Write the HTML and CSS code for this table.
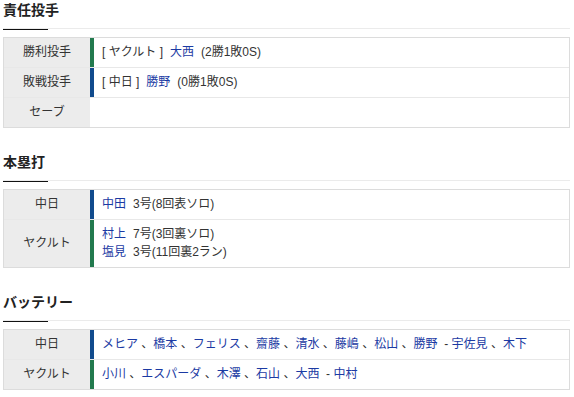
FILE: index.html
```html
<!DOCTYPE html>
<html lang="ja">
<head>
<meta charset="utf-8">
<link rel="stylesheet" href="styles.css">
</head>
<body>
<div class="page">
  <section class="sec">
    <h2 class="sec-title">責任投手</h2>
    <div class="tbl">
      <div class="row">
        <div class="lbl">勝利投手</div>
        <div class="val green"><span class="team">[ ヤクルト ]</span><a class="nm">大西</a><span>(2勝1敗0S)</span></div>
      </div>
      <div class="row">
        <div class="lbl">敗戦投手</div>
        <div class="val blue"><span class="team">[ 中日 ]</span><a class="nm">勝野</a><span>(0勝1敗0S)</span></div>
      </div>
      <div class="row">
        <div class="lbl">セーブ</div>
        <div class="val none"></div>
      </div>
    </div>
  </section>

  <section class="sec">
    <h2 class="sec-title">本塁打</h2>
    <div class="tbl">
      <div class="row">
        <div class="lbl">中日</div>
        <div class="val blue"><div><a class="nm">中田</a><span>3号(8回表ソロ)</span></div></div>
      </div>
      <div class="row">
        <div class="lbl">ヤクルト</div>
        <div class="val green">
          <div><a class="nm">村上</a><span>7号(3回裏ソロ)</span></div>
          <div><a class="nm">塩見</a><span>3号(11回裏2ラン)</span></div>
        </div>
      </div>
    </div>
  </section>

  <section class="sec">
    <h2 class="sec-title">バッテリー</h2>
    <div class="tbl">
      <div class="row">
        <div class="lbl">中日</div>
        <div class="val blue"><a class="pl">メヒア</a> 、<a class="pl">橋本</a> 、<a class="pl">フェリス</a> 、<a class="pl">齋藤</a> 、<a class="pl">清水</a> 、<a class="pl">藤嶋</a> 、<a class="pl">松山</a> 、<a class="pl">勝野</a> &nbsp;- <a class="pl">宇佐見</a> 、<a class="pl">木下</a></div>
      </div>
      <div class="row">
        <div class="lbl">ヤクルト</div>
        <div class="val green"><a class="pl">小川</a> 、<a class="pl">エスパーダ</a> 、<a class="pl">木澤</a> 、<a class="pl">石山</a> 、<a class="pl">大西</a> &nbsp;- <a class="pl">中村</a></div>
      </div>
    </div>
  </section>
</div>
</body>
</html>
```

FILE: styles.css
```css
* { box-sizing: border-box; }

body {
  margin: 0;
  background: #fff;
  color: #333;
  font-family: "Liberation Sans", "Noto Sans CJK JP", sans-serif;
  font-size: 12px;
}

.page {
  width: 570px;
  padding-left: 3px;
}

.sec + .sec {
  margin-top: 24px;
}

.sec-title {
  position: relative;
  margin: 0;
  font-size: 14px;
  font-weight: bold;
  line-height: 20px;
  padding-bottom: 8px;
  color: #222;
  border-bottom: 1px solid #ebebeb;
}

.sec-title::after {
  content: "";
  position: absolute;
  left: 0;
  bottom: -2px;
  width: 45px;
  height: 1px;
  background: #111;
}

.tbl {
  margin-top: 8px;
  border: 1px solid #dcdcdc;
}

.row {
  display: flex;
}

.row + .row {
  border-top: 1px solid #e8e8e8;
}

.lbl {
  width: 86px;
  flex: none;
  background: #ececec;
  text-align: center;
  display: flex;
  align-items: center;
  justify-content: center;
  line-height: 18px;
  padding: 5px 0 6px;
  color: #333;
}

.val {
  flex: 1;
  border-left: 4px solid transparent;
  padding: 5px 0 6px 8px;
  line-height: 18px;
  color: #333;
}

.val.green { border-left-color: #227a4e; }
.val.blue { border-left-color: #114b8d; }
.val.none { border-left-color: #fff; }

.team {
  margin-right: 7px;
}

.nm {
  color: #1b3aa3;
  margin-right: 7px;
}

.pl {
  color: #1b3aa3;
}
```
